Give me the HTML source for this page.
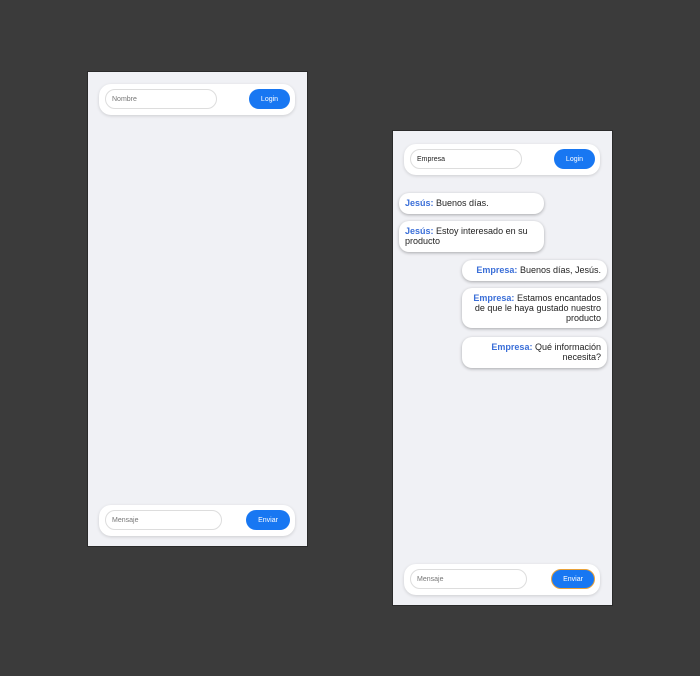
<!DOCTYPE html>
<html><head><style>
body{margin:0;width:700px;height:676px;background:#3b3b3b;position:relative;font-family:"Liberation Sans",Arial,sans-serif;overflow:hidden}
.p{position:absolute;width:221px;height:476px;background:#f0f1f5;border:1px solid #2a2a2a;box-sizing:border-box}
.bar{position:absolute;left:11px;width:196px;height:31px;background:#fff;border-radius:12px;box-shadow:0 1px 3px rgba(0,0,0,.15)}
.in{position:absolute;left:6px;top:5px;height:20px;border:1px solid #ddd;border-radius:10px;box-sizing:border-box;font-size:7px;display:flex;align-items:center;padding-left:6px;color:#777}
.bt{position:absolute;top:5px;height:20px;background:#1877f2;border-radius:10px;color:#fff;font-size:7px;display:flex;align-items:center;justify-content:center;box-sizing:border-box}
.m{position:absolute;width:145px;background:#fff;border-radius:10px;box-shadow:0 1px 3px rgba(0,0,0,.3);font-size:9px;line-height:10px;color:#222;box-sizing:border-box;padding:5px 6px}
.m b{color:#3b6fd8}
.r{text-align:right}
</style></head><body>
<div class="p" style="left:87px;top:71px">
 <div class="bar" style="top:12px"><div class="in" style="width:112px">Nombre</div><div class="bt" style="left:150px;width:41px">Login</div></div>
 <div class="bar" style="top:433px"><div class="in" style="width:117px">Mensaje</div><div class="bt" style="left:147px;width:44px">Enviar</div></div>
</div>
<div class="p" style="left:392px;top:130px">
 <div class="bar" style="top:13px"><div class="in" style="width:112px;color:#222">Empresa</div><div class="bt" style="left:150px;width:41px">Login</div></div>
 <div class="m" style="left:6px;top:62px;height:21px"><b>Jesús:</b> Buenos días.</div>
 <div class="m" style="left:6px;top:90px;height:31px"><b>Jesús:</b> Estoy interesado en su producto</div>
 <div class="m r" style="left:69px;top:129px;height:21px"><b>Empresa:</b> Buenos días, Jesús.</div>
 <div class="m r" style="left:69px;top:157px;height:40px"><b>Empresa:</b> Estamos encantados<br>de que le haya gustado nuestro<br>producto</div>
 <div class="m r" style="left:69px;top:206px;height:31px"><b>Empresa:</b> Qué información<br>necesita?</div>
 <div class="bar" style="top:433px"><div class="in" style="width:117px">Mensaje</div><div class="bt" style="left:147px;width:44px;border:1.5px solid #e8a13a">Enviar</div></div>
</div>
</body></html>
